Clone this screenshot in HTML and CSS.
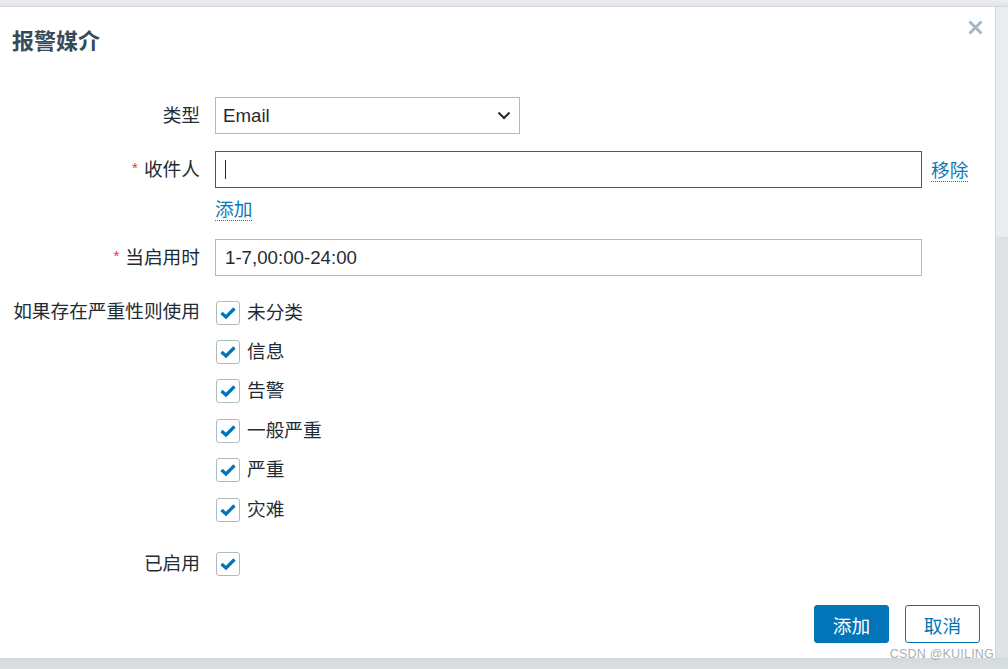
FILE: index.html
```html
<!DOCTYPE html>
<html lang="zh-CN">
<head>
<meta charset="utf-8">
<title>报警媒介</title>
<link rel="stylesheet" href="styles.css">
</head>
<body>
<div class="backdrop">
  <div class="topbar"></div>
  <div class="stage">
    <div class="dialog">
      <div class="dialog-head">
        <h2 class="title">报警媒介</h2>
        <button class="close" aria-label="关闭">
          <svg width="15" height="15" viewBox="0 0 15 15"><path d="M1.5 1.5 L13.5 13.5 M13.5 1.5 L1.5 13.5" stroke="#aab7c0" stroke-width="3" fill="none"/></svg>
        </button>
      </div>
      <div class="form">
        <div class="label">类型</div>
        <div class="control">
          <div class="select">
            <span>Email</span>
            <svg class="chev" width="14" height="9" viewBox="0 0 14 9"><path d="M1.5 1.5 L7 7 L12.5 1.5" stroke="#1f2c33" stroke-width="2" fill="none"/></svg>
          </div>
        </div>

        <div class="label"><span class="req">*</span>收件人</div>
        <div class="control">
          <div class="recip-row">
            <div class="input wide focus"><span class="caret"></span></div>
            <a class="link remove">移除</a>
          </div>
          <a class="link add">添加</a>
        </div>

        <div class="label"><span class="req">*</span>当启用时</div>
        <div class="control">
          <div class="input wide">1-7,00:00-24:00</div>
        </div>

        <div class="label top">如果存在严重性则使用</div>
        <div class="control">
          <ul class="checks">
            <li><span class="cb"><svg width="24" height="24" viewBox="0 0 24 24"><path d="M5.5 12 L10 16 L18.5 7.5" stroke="#0275b8" stroke-width="3.2" fill="none"/></svg></span>未分类</li>
            <li><span class="cb"><svg width="24" height="24" viewBox="0 0 24 24"><path d="M5.5 12 L10 16 L18.5 7.5" stroke="#0275b8" stroke-width="3.2" fill="none"/></svg></span>信息</li>
            <li><span class="cb"><svg width="24" height="24" viewBox="0 0 24 24"><path d="M5.5 12 L10 16 L18.5 7.5" stroke="#0275b8" stroke-width="3.2" fill="none"/></svg></span>告警</li>
            <li><span class="cb"><svg width="24" height="24" viewBox="0 0 24 24"><path d="M5.5 12 L10 16 L18.5 7.5" stroke="#0275b8" stroke-width="3.2" fill="none"/></svg></span>一般严重</li>
            <li><span class="cb"><svg width="24" height="24" viewBox="0 0 24 24"><path d="M5.5 12 L10 16 L18.5 7.5" stroke="#0275b8" stroke-width="3.2" fill="none"/></svg></span>严重</li>
            <li><span class="cb"><svg width="24" height="24" viewBox="0 0 24 24"><path d="M5.5 12 L10 16 L18.5 7.5" stroke="#0275b8" stroke-width="3.2" fill="none"/></svg></span>灾难</li>
          </ul>
        </div>

        <div class="label enabled">已启用</div>
        <div class="control enabled">
          <span class="cb"><svg width="24" height="24" viewBox="0 0 24 24"><path d="M5.5 12 L10 16 L18.5 7.5" stroke="#0275b8" stroke-width="3.2" fill="none"/></svg></span>
        </div>
      </div>
      <div class="footer">
        <button class="btn primary">添加</button>
        <button class="btn secondary">取消</button>
      </div>
    </div>
    <div class="side">
      <div class="side-top"></div>
      <div class="side-bottom"></div>
    </div>
  </div>
  <div class="bottombar"></div>
  <div class="watermark">CSDN @KUILING</div>
</div>
</body>
</html>
```

FILE: styles.css
```css
* { box-sizing: border-box; }
html, body { margin: 0; padding: 0; }
body {
  width: 1008px;
  height: 669px;
  overflow: hidden;
  background: #d6dbdf;
  font-family: "Liberation Sans", Arial, "Noto Sans CJK SC", sans-serif;
  color: #1f2c33;
}
.backdrop {
  position: relative;
  width: 1008px;
  height: 669px;
  display: flex;
  flex-direction: column;
}
.topbar {
  height: 7px;
  background: linear-gradient(#eceef0, #e2e6e9);
  border-bottom: 1px solid #d3d9dd;
}
.stage {
  display: flex;
  height: 651px;
}
.dialog {
  position: relative;
  width: 996px;
  height: 651px;
  background: #fff;
  border-right: 1px solid #cfd6da;
  display: flex;
  flex-direction: column;
}
.side {
  flex: 1;
  display: flex;
  flex-direction: column;
}
.side-top {
  height: 231px;
  background: #eaedef;
  border-bottom: 1px solid #d9dee1;
}
.side-bottom {
  flex: 1;
  background: #dde2e5;
}
.bottombar {
  flex: 1;
  background: linear-gradient(#d3d9dd, #dadfe2);
}
.dialog-head {
  padding: 23px 12px 0;
  height: 54px;
}
.title {
  margin: 0;
  font-size: 22px;
  line-height: 24px;
  font-weight: bold;
  color: #384a57;
  letter-spacing: 0;
}
.close {
  position: absolute;
  top: 13px;
  right: 12px;
  width: 15px;
  height: 15px;
  padding: 0;
  border: 0;
  background: none;
  display: block;
}
.close svg { display: block; }

.form {
  margin-top: 36px;
  display: grid;
  grid-template-columns: 200px 1fr;
  column-gap: 15px;
  row-gap: 17px;
  font-size: 18.7px;
}
.label {
  text-align: right;
  line-height: 37px;
  white-space: nowrap;
  color: #1f2c33;
}
.label.top {
  line-height: 24px;
  margin-top: 6px;
}
.req {
  color: #e33734;
  font-size: 15px;
  position: relative;
  top: -3px;
  margin-right: 6px;
}
.control { min-width: 0; }
.select {
  width: 305px;
  height: 37px;
  border: 1px solid #acbbc2;
  display: flex;
  align-items: center;
  justify-content: space-between;
  padding: 0 8px 0 7px;
  line-height: 35px;
}
.chev { margin-right: 0; }
.recip-row {
  display: flex;
  align-items: center;
}
.input {
  height: 37px;
  border: 1px solid #acbbc2;
  line-height: 35px;
  padding: 0 9px;
  white-space: nowrap;
}
.input.wide { width: 707px; }
.input.focus {
  border-color: #1d649c;
  display: flex;
  align-items: center;
}
.caret {
  width: 1px;
  height: 19px;
  background: #1f2c33;
}
.link {
  color: #0e79b8;
  text-decoration: none;
  border-bottom: 1px dotted #0e79b8;
  line-height: 21px;
}
.remove {
  margin-left: 9px;
  position: relative;
  top: 1px;
}
.add {
  display: inline-block;
  margin-top: 11px;
  margin-bottom: 1px;
}
.checks {
  list-style: none;
  margin: -1px 0 -15px;
  padding: 0 0 0 1px;
}
.checks li {
  display: flex;
  align-items: center;
  height: 39.4px;
  line-height: 24px;
}
.checks li .cb { margin-right: 7px; }
.cb {
  width: 24px;
  height: 24px;
  border: 1px solid #acbbc2;
  border-radius: 3px;
  background: #fff;
  display: inline-flex;
  align-items: center;
  justify-content: center;
  flex: none;
}
.cb svg { display: block; margin: -1px; }
.label.enabled { line-height: 24px; margin-top: 21px; }
.control.enabled { margin-top: 21px; padding-left: 1px; height: 24px; }

.footer {
  margin-top: auto;
  padding: 0 15px 15px 0;
  display: flex;
  justify-content: flex-end;
  gap: 16px;
}
.btn {
  width: 75px;
  height: 38px;
  border-radius: 3px;
  font-family: inherit;
  font-size: 18.7px;
  padding: 0;
  cursor: pointer;
}
.btn.primary {
  background: #0275b8;
  border: 1px solid #0275b8;
  color: #fff;
}
.btn.secondary {
  background: #fff;
  border: 1px solid #0275b8;
  color: #0275b8;
}
.watermark {
  position: absolute;
  right: 14px;
  bottom: 8px;
  font-size: 12.5px;
  color: #a9afb3;
  letter-spacing: 0.2px;
}
```
